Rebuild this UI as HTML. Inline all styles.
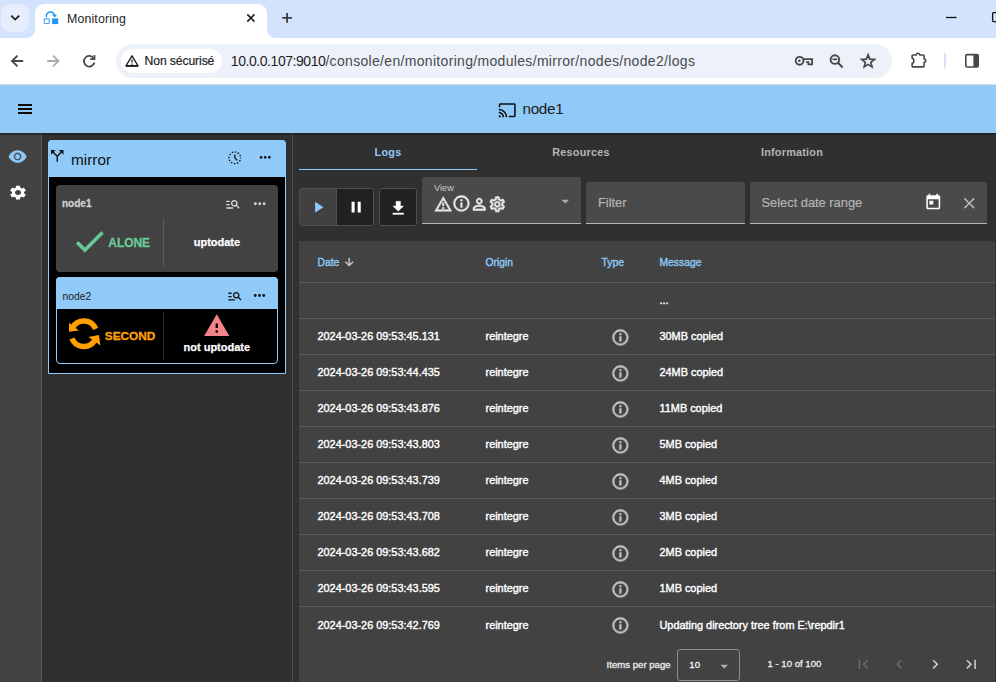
<!DOCTYPE html>
<html lang="en"><head><meta charset="utf-8"><title>Monitoring</title>
<style>
*{box-sizing:border-box;margin:0;padding:0}
html,body{width:996px;height:682px;overflow:hidden;background:#303030;font-family:"Liberation Sans",Arial,sans-serif;}
.abs{position:absolute;white-space:nowrap}
#tabstrip{left:0;top:0;width:996px;height:38px;background:#d3e3fd}
#tabsearch{left:1px;top:4px;width:28px;height:28px;border-radius:9px;background:#e6eefd}
#tab{left:35px;top:4px;width:232px;height:34px;background:#fff;border-radius:9px 9px 0 0}
#tab:before,#tab:after{content:"";position:absolute;bottom:0;width:8px;height:8px}
#tab:before{left:-8px;background:radial-gradient(circle at 0 0,rgba(255,255,255,0) 7.5px,#fff 8px)}
#tab:after{right:-8px;background:radial-gradient(circle at 100% 0,rgba(255,255,255,0) 7.5px,#fff 8px)}
#tabtitle{left:67px;top:12.200px;font-size:12.4px;color:#1f1f1f;letter-spacing:.12px}
#toolbar{left:0;top:38px;width:996px;height:46px;background:#fff}
#tbline{left:0;top:84px;width:996px;height:1px;background:#dcdcdc}
#omni{left:116px;top:44px;width:776px;height:34px;border-radius:17px;background:#edf1fa}
#chip{left:120.5px;top:48.5px;width:101px;height:24px;border-radius:12px;background:#fff}
#chiptxt{left:144.6px;top:54px;font-size:12.2px;color:#1f1f1f;-webkit-text-stroke:.2px #1f1f1f;letter-spacing:-.12px}
#url{left:230.8px;top:52.8px;font-size:14px;color:#4a4a4a;letter-spacing:.32px}
#url b{font-weight:normal;color:#1f1f1f;letter-spacing:-.44px}
#appbar{left:0;top:85px;width:996px;height:48px;background:#90caf9}
#appsh{left:0;top:133px;width:996px;height:3px;background:linear-gradient(#1f1f1f,rgba(40,40,40,0))}
#apptitle{left:522.5px;top:99.5px;font-size:15.3px;color:#1c1c1c;letter-spacing:-.32px}
#side{left:0;top:133px;width:41px;height:549px;background:#424242}
#sideb{left:41px;top:133px;width:1px;height:549px;background:#585858}
#lpb{left:292px;top:133px;width:1px;height:549px;background:#4c4c4c}
#mod{left:48px;top:140px;width:238px;height:234px;background:#000;border:1px solid #90caf9;border-radius:4px 4px 0 0}
#modh{left:48px;top:140px;width:238px;height:37px;background:#90caf9;border-radius:4px 4px 0 0}
#modt{left:71px;top:150.5px;font-size:15.4px;color:#111}
#n1{left:56px;top:185px;width:222px;height:87px;background:#424242;border-radius:4px}
#n2{left:56px;top:277px;width:222px;height:87px;background:#000;border:1px solid #90caf9;border-radius:4px}
#n2h{left:56px;top:277px;width:222px;height:32px;background:#90caf9;border-radius:4px 4px 0 0}
.nname{font-size:10px;font-weight:bold}
.vdiv{width:1px;background:#5a5a5a}
.state{font-size:12.3px;font-weight:bold}
.tab{font-size:10.8px;font-weight:bold;letter-spacing:.25px;color:#b5b5b5;text-align:center;width:180px}
#ink{left:299px;top:168.8px;width:178px;height:1.6px;background:#90caf9}
.btn{top:188px;height:38px;background:#212121;border:1px solid #505050;border-radius:3px}
.field{top:182px;height:41.9px;background:#4a4a4a;border-radius:3px 3px 0 0;border-bottom:1px solid #b4b4b4}
.ph{font-size:12.85px;color:#b4b4b4;-webkit-text-stroke:.2px #b4b4b4}
#table{left:299px;top:240.7px;width:696px;height:442px;background:#424242}
.th{top:256.5px;font-size:10.35px;color:#90caf9;-webkit-text-stroke:.35px #90caf9}
.row{left:299px;width:696px;height:1px;background:#5b5b5b}
.c{font-size:10.9px;color:#fff;-webkit-text-stroke:.4px #fff}
.pg{font-size:9.6px;color:#ececec;-webkit-text-stroke:.3px #ececec}
</style></head><body>
<div class="abs" id="tabstrip"></div>
<div class="abs" id="tabsearch"></div>
<div class="abs" id="tab"></div>
<div class="abs" id="tabtitle">Monitoring</div>
<div class="abs" id="toolbar"></div>
<div class="abs" id="tbline"></div>
<div class="abs" id="omni"></div>
<div class="abs" id="chip"></div>
<div class="abs" id="chiptxt">Non sécurisé</div>
<div class="abs" id="url"><b>10.0.0.107:9010</b>/console/en/monitoring/modules/mirror/nodes/node2/logs</div>

<svg class="abs" style="left:0;top:0" width="996" height="85" viewBox="0 0 996 85" fill="none" stroke-linecap="butt" stroke-linejoin="miter">
<path d="M11.2 15.6l4 4 4-4" stroke="#1f1f1f" stroke-width="1.8"/>
<g stroke="#2196f3" stroke-width="1.300"><rect x="44.200" y="18.900" width="5" height="4.600" rx=".7" stroke="#4aa8f6" stroke-width="1.200"/><rect x="52.100" y="18.400" width="6.100" height="5.700" fill="#2196f3" stroke="none"/><path d="M46.300 17.100A4.200 4.900 0 0 1 54.500 15.400" stroke-width="1.400"/><path d="M52.100 14.800L57.100 14.600 54.700 17.500z" fill="#2196f3" stroke="none"/></g>
<path d="M247.300 14.400l7.200 7.200m0-7.200l-7.200 7.200" stroke="#1f1f1f" stroke-width="1.600"/>
<path d="M282.200 17.900h9.800M287.100 13v9.800" stroke="#3c3c3c" stroke-width="1.800"/>
<path d="M946 17.500h10.500" stroke="#111" stroke-width="1.3"/>
<rect x="992.600" y="12.600" width="9" height="9" rx="1" stroke="#111" stroke-width="1.3"/>
<g stroke="#474747" stroke-width="1.800"><path d="M23.200 61H12.500M17.500 55.600L12 61l5.500 5.400"/></g>
<g stroke="#adadad" stroke-width="1.800"><path d="M47.200 61H58M53 55.600L58.500 61 53 66.400"/></g>
<g stroke="#474747" stroke-width="1.800"><path d="M93.600 58.200A5.300 5.300 0 1 0 94.400 62.500"/><path d="M94.500 54.900v4.300h-4.300" stroke-width="1.700"/></g>
<g stroke="#1f1f1f" stroke-width="1.400"><path d="M132 55.800l6.100 10.200H125.900z" stroke-linejoin="round"/><path d="M126 65.800h12" stroke-width="1.700"/><path d="M132 59.600v3M132 63.500v1.300" stroke-width="1.200"/></g>
<g stroke="#474747" stroke-width="1.900"><circle cx="799.600" cy="60.800" r="3.900"/><circle cx="799.400" cy="60.800" r=".7" fill="#474747" stroke-width="1.200"/><path d="M803.400 59.100h8.700v5.300h-3.700v-2.300h-2.300" stroke-width="1.800"/></g>
<g stroke="#474747" stroke-width="1.900"><circle cx="834.900" cy="59.600" r="4.300"/><path d="M838.200 63l4.500 4.500" stroke-width="2"/><path d="M832.500 59.300h4.600" stroke-width="1.700"/></g>
<path d="M868.10 54.80L869.80 59.15L874.47 59.43L870.86 62.40L872.04 66.92L868.10 64.40L864.16 66.92L865.34 62.40L861.73 59.43L866.40 59.15z" stroke="#474747" stroke-width="1.700" stroke-linejoin="miter"/>
<path d="M913 55H916.300a1.700 1.700 0 0 1 3.400 0H923.200a.9.9 0 0 1 .9.9V59a1.700 1.700 0 0 1 0 3.400V66a.9.9 0 0 1-.9.9H913a.9.9 0 0 1-.9-.9V63.400c2.400-.3 2.400-4.900 0-5.200V55.900a.9.9 0 0 1 .9-.9z" stroke="#474747" stroke-width="1.600" stroke-linejoin="round"/>
<path d="M945 53v15.500" stroke="#c3d3f3" stroke-width="1.300"/>
<rect x="965.800" y="54.600" width="12.400" height="12.400" rx="1.300" stroke="#474747" stroke-width="1.600"/><rect x="973.400" y="54.600" width="4.800" height="12.400" fill="#474747"/>
</svg>
<div class="abs" id="appbar"></div>
<div class="abs" id="apptitle">node1</div>
<div class="abs" id="side"></div>
<div class="abs" id="sideb"></div>
<div class="abs" id="lpb"></div>
<div class="abs" id="appsh"></div>
<svg class="abs" style="left:18px;top:104px" width="14" height="10" viewBox="0 0 14 10"><path fill="#0c0c0c" d="M0 0h14v2H0zM0 4h14v2H0zM0 8h14v2H0z"/></svg>
<svg class="abs" style="left:497.75px;top:100.75px;" width="18.5" height="18.5" viewBox="0 0 24 24"><path fill="#111" d="M21 3H3c-1.1 0-2 .9-2 2v3h2V5h18v14h-7v2h7c1.1 0 2-.9 2-2V5c0-1.1-.9-2-2-2zM1 18v3h3c0-1.66-1.34-3-3-3zm0-4v2c2.76 0 5 2.24 5 5h2c0-3.87-3.13-7-7-7zm0-4v2c4.97 0 9 4.03 9 9h2c0-6.08-4.93-11-11-11z"/></svg>
<svg class="abs" style="left:8.30px;top:147.20px;" width="19.2" height="19.2" viewBox="0 0 24 24"><path fill="#90caf9" stroke="#90caf9" stroke-width="0.5" d="M12 4.5C7 4.5 2.73 7.61 1 12c1.73 4.39 6 7.5 11 7.5s9.27-3.11 11-7.5c-1.73-4.39-6-7.5-11-7.5zM12 17c-2.76 0-5-2.24-5-5s2.24-5 5-5 5 2.24 5 5-2.24 5-5 5zm0-8c-1.66 0-3 1.34-3 3s1.34 3 3 3 3-1.34 3-3-1.34-3-3-3z"/></svg>
<svg class="abs" style="left:7.900px;top:184.400px" width="20" height="17.200" viewBox="0 0 24 24" preserveAspectRatio="none"><path fill="#fff" d="M19.14 12.94c.04-.3.06-.61.06-.94 0-.32-.02-.64-.07-.94l2.03-1.58c.18-.14.23-.41.12-.61l-1.92-3.32c-.12-.22-.37-.29-.59-.22l-2.39.96c-.5-.38-1.03-.7-1.62-.94l-.36-2.54c-.04-.24-.24-.41-.48-.41h-3.84c-.24 0-.43.17-.47.41l-.36 2.54c-.59.24-1.13.57-1.62.94l-2.39-.96c-.22-.08-.47 0-.59.22L2.74 8.87c-.12.21-.08.47.12.61l2.03 1.58c-.05.3-.09.63-.09.94s.02.64.07.94l-2.03 1.58c-.18.14-.23.41-.12.61l1.92 3.32c.12.22.37.29.59.22l2.39-.96c.5.38 1.03.7 1.62.94l.36 2.54c.05.24.24.41.48.41h3.84c.24 0 .44-.17.47-.41l.36-2.54c.59-.24 1.13-.56 1.62-.94l2.39.96c.22.08.47 0 .59-.22l1.92-3.32c.12-.22.07-.47-.12-.61l-2.01-1.58zM12 15.6c-1.98 0-3.6-1.62-3.6-3.6s1.62-3.6 3.6-3.6 3.6 1.62 3.6 3.6-1.62 3.6-3.6 3.6z"/></svg>
<div class="abs" id="mod"></div>
<div class="abs" id="modh"></div>
<div class="abs" id="modt">mirror</div>
<svg class="abs" style="left:48px;top:146px" width="20" height="20" viewBox="48 146 20 20"><path d="M52.500 151.500L57.250 156.300V161.850M62 151.500L57.700 155.800" stroke="#111" stroke-width="1.400" fill="none"/><path d="M51 150h4.700L51 154.700zM63.500 150h-4.700l4.700 4.700z" fill="#111"/></svg>
<svg class="abs" style="left:226.500px;top:149.600px" width="15.600" height="15.600" viewBox="0 0 24 24"><circle cx="12" cy="12" r="9" fill="none" stroke="#111" stroke-width="2" stroke-dasharray="2.350 2.360" stroke-dashoffset="1.200"/><path d="M13 7h-2v5.410l4.290 4.290 1.410-1.410-3.700-3.700z" fill="#111"/></svg>
<svg class="abs" style="left:257.35px;top:148.95px;" width="16.5" height="16.5" viewBox="0 0 24 24"><path fill="#111" d="M6 10c-1.1 0-2 .9-2 2s.9 2 2 2 2-.9 2-2-.9-2-2-2zm12 0c-1.1 0-2 .9-2 2s.9 2 2 2 2-.9 2-2-.9-2-2-2zm-6 0c-1.1 0-2 .9-2 2s.9 2 2 2 2-.9 2-2-.9-2-2-2z"/></svg>
<div class="abs" id="n1"></div>
<div class="abs nname" style="left:62px;top:197.500px;color:#cfcfcf;-webkit-text-stroke:.3px #cfcfcf">node1</div>
<svg class="abs" style="left:225.20px;top:196.00px;" width="16" height="16" viewBox="0 0 24 24"><path fill="#e0e0e0" d="M7 9H2V7h5v2zm0 3H2v2h5v-2zm13.59 7l-3.83-3.830c-.8.520-1.740.830-2.760.830-2.760 0-5-2.240-5-5s2.240-5 5-5 5 2.240 5 5c0 1.020-.310 1.960-.830 2.750L22 17.590 20.590 19zM17 11c0-1.650-1.350-3-3-3s-3 1.350-3 3 1.350 3 3 3 3-1.350 3-3zM2 19h10v-2H2v2z"/></svg>
<svg class="abs" style="left:250.75px;top:195.45px;" width="17.5" height="17.5" viewBox="0 0 24 24"><path fill="#d0d0d0" d="M6 10c-1.1 0-2 .9-2 2s.9 2 2 2 2-.9 2-2-.9-2-2-2zm12 0c-1.1 0-2 .9-2 2s.9 2 2 2 2-.9 2-2-.9-2-2-2zm-6 0c-1.1 0-2 .9-2 2s.9 2 2 2 2-.9 2-2-.9-2-2-2z"/></svg>
<div class="abs vdiv" style="left:163px;top:219px;height:48px"></div>
<svg class="abs" style="left:70.80px;top:223.40px;" width="37" height="37" viewBox="0 0 24 24"><path fill="#69c997" stroke="#69c997" stroke-width="0.5" d="M9 16.170L4.830 12l-1.420 1.410L9 19 21 7l-1.410-1.410z"/></svg>
<div class="abs state" style="left:108.300px;top:235.500px;color:#69c997;font-size:11.950px;-webkit-text-stroke:.3px #69c997">ALONE</div>
<div class="abs state" style="left:193.700px;top:236px;color:#fff;font-size:11px;-webkit-text-stroke:.25px #fff">uptodate</div>
<div class="abs" id="n2"></div><div class="abs" id="n2h"></div>
<div class="abs nname" style="left:62.500px;top:290.500px;color:#222;font-weight:normal;font-size:10.400px">node2</div>
<svg class="abs" style="left:226.90px;top:287.90px;" width="15.8" height="15.8" viewBox="0 0 24 24"><path fill="#111" d="M7 9H2V7h5v2zm0 3H2v2h5v-2zm13.59 7l-3.83-3.830c-.8.520-1.740.830-2.760.830-2.760 0-5-2.240-5-5s2.240-5 5-5 5 2.240 5 5c0 1.020-.310 1.960-.830 2.750L22 17.590 20.590 19zM17 11c0-1.650-1.350-3-3-3s-3 1.350-3 3 1.350 3 3 3 3-1.350 3-3zM2 19h10v-2H2v2z"/></svg>
<svg class="abs" style="left:250.70px;top:287.30px;" width="17" height="17" viewBox="0 0 24 24"><path fill="#111" d="M6 10c-1.1 0-2 .9-2 2s.9 2 2 2 2-.9 2-2-.9-2-2-2zm12 0c-1.1 0-2 .9-2 2s.9 2 2 2 2-.9 2-2-.9-2-2-2zm-6 0c-1.1 0-2 .9-2 2s.9 2 2 2 2-.9 2-2-.9-2-2-2z"/></svg>
<div class="abs vdiv" style="left:163px;top:312px;height:48px;background:#2c2c2c"></div>
<svg class="abs" style="left:62px;top:310px" width="48" height="48" viewBox="0 0 48 48"><g fill="none" stroke="#ffa000" stroke-width="5.500"><path d="M10.720 17.300A12.800 12.800 0 0 1 33.670 18.900"/><path d="M32.880 30.100A12.800 12.800 0 0 1 9.930 28.500"/></g><path fill="#ffa000" d="M7 12.700V21.800L16.900 20.400zM37 25L38.400 35.600 26.400 27z"/></svg>
<div class="abs state" style="left:104.800px;top:328.700px;color:#ffa000;font-size:11.800px;-webkit-text-stroke:.3px #ffa000">SECOND</div>
<svg class="abs" style="left:203.25px;top:312.25px;" width="27.5" height="27.5" viewBox="0 0 24 24"><path fill="#f4838c" d="M1 21h22L12 2 1 21zm12-3h-2v-2h2v2zm0-4h-2v-4h2v4z"/></svg>
<div class="abs state" style="left:183.500px;top:341.400px;color:#fff;font-size:11px;-webkit-text-stroke:.25px #fff">not uptodate</div>
<div class="abs tab" style="left:298px;top:145.800px;color:#90caf9">Logs</div>
<div class="abs tab" style="left:491px;top:145.800px">Resources</div>
<div class="abs tab" style="left:702px;top:145.800px">Information</div>
<div class="abs" id="ink"></div>
<div class="abs btn" style="left:299px;width:75px"></div>
<div class="abs" style="left:300px;top:189px;width:37px;height:36px;background:#414141;border-radius:2px 0 0 2px;border-right:1px solid #505050"></div>
<div class="abs btn" style="left:379px;width:38px"></div>
<svg class="abs" style="left:309.25px;top:198.35px;" width="18.3" height="18.3" viewBox="0 0 24 24"><path fill="#90caf9" d="M8 5v14l11-7z"/></svg>
<svg class="abs" style="left:346.55px;top:198.35px;" width="18.3" height="18.3" viewBox="0 0 24 24"><path fill="#fff" d="M6 19h4V5H6v14zm8-14v14h4V5h-4z"/></svg>
<svg class="abs" style="left:389.15px;top:198.75px;" width="18.5" height="18.5" viewBox="0 0 24 24"><path fill="#fff" stroke="#fff" stroke-width="0.4" d="M19 9h-4V3H9v6H5l7 7 7-7zM5 18v2h14v-2H5z"/></svg>
<div class="abs field" style="left:422px;top:177px;height:47px;width:159px"></div>
<div class="abs" style="left:434px;top:182.500px;font-size:9.250px;color:#c8c8c8">View</div>
<svg class="abs" style="left:433.85px;top:194.75px;" width="18.5" height="18.5" viewBox="0 0 24 24"><path fill="#e8e8e8" stroke="#e8e8e8" stroke-width="0.7" d="M12 5.990L19.530 19H4.470L12 5.990M12 2L1 21h22L12 2zm1 14h-2v2h2v-2zm0-6h-2v4h2v-4z"/></svg>
<svg class="abs" style="left:451.75px;top:194.15px;" width="18.9" height="18.9" viewBox="0 0 24 24"><path fill="#e8e8e8" stroke="#e8e8e8" stroke-width="0.7" d="M11 7h2v2h-2zm0 4h2v6h-2zm1-9C6.480 2 2 6.480 2 12s4.480 10 10 10 10-4.480 10-10S17.520 2 12 2zm0 18c-4.410 0-8-3.590-8-8s3.590-8 8-8 8 3.590 8 8-3.590 8-8 8z"/></svg>
<svg class="abs" style="left:469.85px;top:194.65px;" width="18.5" height="18.5" viewBox="0 0 24 24"><path fill="#e8e8e8" stroke="#e8e8e8" stroke-width="0.9" d="M12 5.900c1.160 0 2.100.940 2.100 2.100s-.940 2.100-2.100 2.100S9.900 9.160 9.900 8s.940-2.100 2.100-2.100m0 9c2.970 0 6.100 1.460 6.100 2.100v1.100H5.900V17c0-.640 3.130-2.100 6.100-2.100M12 4C9.790 4 8 5.790 8 8s1.790 4 4 4 4-1.790 4-4-1.790-4-4-4zm0 9c-2.670 0-8 1.340-8 4v3h16v-3c0-2.660-5.330-4-8-4z"/></svg>
<svg class="abs" style="left:487.80px;top:194.80px;" width="18.6" height="18.6" viewBox="0 0 24 24"><path fill="#e8e8e8" stroke="#e8e8e8" stroke-width="0.7" d="M19.430 12.980c.040-.320.070-.640.070-.980 0-.340-.030-.660-.070-.980l2.110-1.650c.190-.150.240-.420.120-.640l-2-3.460c-.090-.160-.260-.250-.440-.250-.060 0-.120.010-.170.030l-2.490 1c-.520-.4-1.080-.730-1.690-.980l-.380-2.650C14.460 2.180 14.250 2 14 2h-4c-.250 0-.460.180-.490.420l-.380 2.650c-.610.250-1.170.590-1.690.980l-2.490-1c-.060-.020-.120-.030-.180-.030-.170 0-.340.090-.430.250l-2 3.460c-.130.220-.070.490.120.640l2.110 1.650c-.040.320-.070.650-.070.980 0 .330.030.660.070.980l-2.110 1.650c-.190.150-.240.420-.120.640l2 3.460c.090.160.260.250.440.250.060 0 .120-.010.170-.030l2.490-1c.520.4 1.080.730 1.690.980l.380 2.650c.030.240.240.420.490.420h4c.250 0 .460-.180.490-.420l.380-2.650c.610-.250 1.170-.590 1.690-.980l2.490 1c.060.020.120.030.180.030.170 0 .340-.090.430-.250l2-3.460c.120-.220.070-.490-.120-.640l-2.110-1.650zm-1.980-1.710c.040.310.050.520.050.730 0 .210-.020.430-.050.730l-.140 1.130.890.700 1.080.840-.7 1.210-1.270-.510-1.040-.420-.9.680c-.430.320-.840.560-1.250.730l-1.060.430-.160 1.130-.2 1.350h-1.400l-.190-1.350-.160-1.130-1.060-.430c-.430-.180-.830-.410-1.230-.710l-.910-.7-1.060.430-1.270.510-.7-1.210 1.080-.840.890-.7-.140-1.130c-.030-.310-.050-.540-.050-.740s.020-.430.050-.730l.140-1.130-.890-.7-1.080-.840.7-1.210 1.270.510 1.040.420.9-.680c.430-.320.840-.560 1.250-.730l1.060-.430.160-1.130.2-1.350h1.390l.190 1.350.160 1.130 1.060.430c.430.180.830.410 1.230.710l.910.7 1.060-.430 1.270-.510.7 1.210-1.070.850-.890.7.140 1.130zM12 8c-2.210 0-4 1.790-4 4s1.790 4 4 4 4-1.790 4-4-1.790-4-4-4zm0 6c-1.100 0-2-.9-2-2s.9-2 2-2 2 .9 2 2-.9 2-2 2z"/></svg>
<svg class="abs" style="left:555.75px;top:192.25px;" width="18.5" height="18.5" viewBox="0 0 24 24"><path fill="#b0b0b0" d="M7 10l5 5 5-5z"/></svg>
<div class="abs field" style="left:586px;width:159px"></div>
<div class="abs ph" style="left:598px;top:195px">Filter</div>
<div class="abs field" style="left:750px;width:237px"></div>
<div class="abs ph" style="left:761.500px;top:195px">Select date range</div>
<svg class="abs" style="left:923.75px;top:193.05px;" width="18.5" height="18.5" viewBox="0 0 24 24"><path fill="#fff" d="M19 3h-1V1h-2v2H8V1H6v2H5c-1.110 0-1.990.9-1.990 2L3 19c0 1.100.890 2 2 2h14c1.100 0 2-.9 2-2V5c0-1.100-.9-2-2-2zm0 16H5V8h14v11zM7 10h5v5H7z"/></svg>
<svg class="abs" style="left:959.85px;top:193.85px;" width="18.5" height="18.5" viewBox="0 0 24 24"><path fill="#b8b8b8" d="M19 6.410L17.590 5 12 10.590 6.410 5 5 6.410 10.590 12 5 17.590 6.410 19 12 13.410 17.590 19 19 17.590 13.410 12z"/></svg>
<div class="abs" id="table"></div>
<div class="abs th" style="left:317.500px">Date</div>
<div class="abs th" style="left:485.500px">Origin</div>
<div class="abs th" style="left:601.500px">Type</div>
<div class="abs th" style="left:659.500px">Message</div>
<svg class="abs" style="left:342.95px;top:256.25px;" width="12.3" height="12.3" viewBox="0 0 24 24"><path fill="#d0d0d0" stroke="#d0d0d0" stroke-width="0.8" d="M20 12l-1.410-1.410L13 16.170V4h-2v12.170l-5.580-5.590L4 12l8 8 8-8z"/></svg>
<div class="abs row" style="top:282.4px"></div>
<div class="abs c" style="left:659.500px;top:293.6px">...</div>
<div class="abs row" style="top:318.4px"></div>
<div class="abs c" style="left:317.500px;top:329.7px">2024-03-26 09:53:45.131</div>
<div class="abs c" style="left:485.500px;top:329.7px">reintegre</div>
<svg class="abs" style="left:610.60px;top:327.70px;" width="18.8" height="18.8" viewBox="0 0 24 24"><path fill="#bdbdbd" stroke="#bdbdbd" stroke-width="0.9" d="M11 7h2v2h-2zm0 4h2v6h-2zm1-9C6.480 2 2 6.480 2 12s4.480 10 10 10 10-4.480 10-10S17.520 2 12 2zm0 18c-4.410 0-8-3.590-8-8s3.590-8 8-8 8 3.590 8 8-3.590 8-8 8z"/></svg>
<div class="abs c" style="left:659.500px;top:329.7px">30MB copied</div>
<div class="abs row" style="top:354.4px"></div>
<div class="abs c" style="left:317.500px;top:365.7px">2024-03-26 09:53:44.435</div>
<div class="abs c" style="left:485.500px;top:365.7px">reintegre</div>
<svg class="abs" style="left:610.60px;top:363.70px;" width="18.8" height="18.8" viewBox="0 0 24 24"><path fill="#bdbdbd" stroke="#bdbdbd" stroke-width="0.9" d="M11 7h2v2h-2zm0 4h2v6h-2zm1-9C6.480 2 2 6.480 2 12s4.480 10 10 10 10-4.480 10-10S17.520 2 12 2zm0 18c-4.410 0-8-3.590-8-8s3.590-8 8-8 8 3.590 8 8-3.590 8-8 8z"/></svg>
<div class="abs c" style="left:659.500px;top:365.7px">24MB copied</div>
<div class="abs row" style="top:390.4px"></div>
<div class="abs c" style="left:317.500px;top:401.7px">2024-03-26 09:53:43.876</div>
<div class="abs c" style="left:485.500px;top:401.7px">reintegre</div>
<svg class="abs" style="left:610.60px;top:399.70px;" width="18.8" height="18.8" viewBox="0 0 24 24"><path fill="#bdbdbd" stroke="#bdbdbd" stroke-width="0.9" d="M11 7h2v2h-2zm0 4h2v6h-2zm1-9C6.480 2 2 6.480 2 12s4.480 10 10 10 10-4.480 10-10S17.520 2 12 2zm0 18c-4.410 0-8-3.590-8-8s3.590-8 8-8 8 3.590 8 8-3.590 8-8 8z"/></svg>
<div class="abs c" style="left:659.500px;top:401.7px">11MB copied</div>
<div class="abs row" style="top:426.4px"></div>
<div class="abs c" style="left:317.500px;top:437.7px">2024-03-26 09:53:43.803</div>
<div class="abs c" style="left:485.500px;top:437.7px">reintegre</div>
<svg class="abs" style="left:610.60px;top:435.70px;" width="18.8" height="18.8" viewBox="0 0 24 24"><path fill="#bdbdbd" stroke="#bdbdbd" stroke-width="0.9" d="M11 7h2v2h-2zm0 4h2v6h-2zm1-9C6.480 2 2 6.480 2 12s4.480 10 10 10 10-4.480 10-10S17.520 2 12 2zm0 18c-4.410 0-8-3.590-8-8s3.590-8 8-8 8 3.590 8 8-3.590 8-8 8z"/></svg>
<div class="abs c" style="left:659.500px;top:437.7px">5MB copied</div>
<div class="abs row" style="top:462.4px"></div>
<div class="abs c" style="left:317.500px;top:473.7px">2024-03-26 09:53:43.739</div>
<div class="abs c" style="left:485.500px;top:473.7px">reintegre</div>
<svg class="abs" style="left:610.60px;top:471.70px;" width="18.8" height="18.8" viewBox="0 0 24 24"><path fill="#bdbdbd" stroke="#bdbdbd" stroke-width="0.9" d="M11 7h2v2h-2zm0 4h2v6h-2zm1-9C6.480 2 2 6.480 2 12s4.480 10 10 10 10-4.480 10-10S17.520 2 12 2zm0 18c-4.410 0-8-3.590-8-8s3.590-8 8-8 8 3.590 8 8-3.590 8-8 8z"/></svg>
<div class="abs c" style="left:659.500px;top:473.7px">4MB copied</div>
<div class="abs row" style="top:498.4px"></div>
<div class="abs c" style="left:317.500px;top:509.7px">2024-03-26 09:53:43.708</div>
<div class="abs c" style="left:485.500px;top:509.7px">reintegre</div>
<svg class="abs" style="left:610.60px;top:507.70px;" width="18.8" height="18.8" viewBox="0 0 24 24"><path fill="#bdbdbd" stroke="#bdbdbd" stroke-width="0.9" d="M11 7h2v2h-2zm0 4h2v6h-2zm1-9C6.480 2 2 6.480 2 12s4.480 10 10 10 10-4.480 10-10S17.520 2 12 2zm0 18c-4.410 0-8-3.590-8-8s3.590-8 8-8 8 3.590 8 8-3.590 8-8 8z"/></svg>
<div class="abs c" style="left:659.500px;top:509.7px">3MB copied</div>
<div class="abs row" style="top:534.4px"></div>
<div class="abs c" style="left:317.500px;top:545.7px">2024-03-26 09:53:43.682</div>
<div class="abs c" style="left:485.500px;top:545.7px">reintegre</div>
<svg class="abs" style="left:610.60px;top:543.70px;" width="18.8" height="18.8" viewBox="0 0 24 24"><path fill="#bdbdbd" stroke="#bdbdbd" stroke-width="0.9" d="M11 7h2v2h-2zm0 4h2v6h-2zm1-9C6.480 2 2 6.480 2 12s4.480 10 10 10 10-4.480 10-10S17.520 2 12 2zm0 18c-4.410 0-8-3.590-8-8s3.590-8 8-8 8 3.590 8 8-3.590 8-8 8z"/></svg>
<div class="abs c" style="left:659.500px;top:545.7px">2MB copied</div>
<div class="abs row" style="top:570.4px"></div>
<div class="abs c" style="left:317.500px;top:581.7px">2024-03-26 09:53:43.595</div>
<div class="abs c" style="left:485.500px;top:581.7px">reintegre</div>
<svg class="abs" style="left:610.60px;top:579.70px;" width="18.8" height="18.8" viewBox="0 0 24 24"><path fill="#bdbdbd" stroke="#bdbdbd" stroke-width="0.9" d="M11 7h2v2h-2zm0 4h2v6h-2zm1-9C6.480 2 2 6.480 2 12s4.480 10 10 10 10-4.480 10-10S17.520 2 12 2zm0 18c-4.410 0-8-3.590-8-8s3.590-8 8-8 8 3.590 8 8-3.590 8-8 8z"/></svg>
<div class="abs c" style="left:659.500px;top:581.7px">1MB copied</div>
<div class="abs row" style="top:606.4px"></div>
<div class="abs c" style="left:317.500px;top:618.5px">2024-03-26 09:53:42.769</div>
<div class="abs c" style="left:485.500px;top:618.5px">reintegre</div>
<svg class="abs" style="left:610.60px;top:615.70px;" width="18.8" height="18.8" viewBox="0 0 24 24"><path fill="#bdbdbd" stroke="#bdbdbd" stroke-width="0.9" d="M11 7h2v2h-2zm0 4h2v6h-2zm1-9C6.480 2 2 6.480 2 12s4.480 10 10 10 10-4.480 10-10S17.520 2 12 2zm0 18c-4.410 0-8-3.590-8-8s3.590-8 8-8 8 3.590 8 8-3.590 8-8 8z"/></svg>
<div class="abs c" style="left:659.500px;top:618.5px">Updating directory tree from E:\repdir1</div>
<div class="abs pg" style="left:606.600px;top:658.800px">Items per page</div>
<div class="abs" style="left:677px;top:649px;width:63px;height:31.500px;border:1px solid #8c8c8c;border-radius:3px"></div>
<div class="abs pg" style="left:689.300px;top:658.800px;color:#fff">10</div>
<div class="abs pg" style="left:767.500px;top:657.500px">1 - 10 of 100</div>
<svg class="abs" style="left:714.75px;top:657.05px;" width="18.5" height="18.5" viewBox="0 0 24 24"><path fill="#b0b0b0" d="M7 10l5 5 5-5z"/></svg>
<svg class="abs" style="left:853.95px;top:654.75px;" width="18.5" height="18.5" viewBox="0 0 24 24"><path fill="#6a6a6a" d="M18.410 16.590L13.820 12l4.590-4.590L17 6l-6 6 6 6zM6 6h2v12H6z"/></svg>
<svg class="abs" style="left:889.95px;top:654.75px;" width="18.5" height="18.5" viewBox="0 0 24 24"><path fill="#6a6a6a" d="M15.410 7.410L14 6l-6 6 6 6 1.410-1.410L10.830 12z"/></svg>
<svg class="abs" style="left:925.65px;top:654.75px;" width="18.5" height="18.5" viewBox="0 0 24 24"><path fill="#cfcfcf" d="M10 6L8.590 7.410 13.170 12l-4.580 4.590L10 18l6-6z"/></svg>
<svg class="abs" style="left:961.75px;top:654.75px;" width="18.5" height="18.5" viewBox="0 0 24 24"><path fill="#cfcfcf" d="M5.590 7.410L10.180 12l-4.590 4.590L7 18l6-6-6-6zM16 6h2v12h-2z"/></svg>
</body></html>
